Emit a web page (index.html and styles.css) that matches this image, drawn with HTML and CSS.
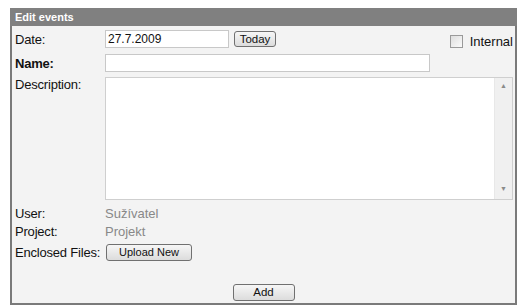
FILE: index.html
```html
<!DOCTYPE html>
<html lang="en">
<head>
  <meta charset="UTF-8">
  <meta name="viewport" content="width=device-width, initial-scale=1.0">
  <title>Edit events</title>
  <link rel="stylesheet" href="styles.css">
</head>
<body>
  <div class="panel">
    <div class="panel-title">Edit events</div>
    <div class="panel-body">
      <div class="row row-date">
        <label class="label">Date:</label>
        <div class="field">
          <input class="input input-date" type="text" value="27.7.2009">
          <button class="button button-today">Today</button>
          <span class="internal">
            <span class="checkbox"></span>
            Internal
          </span>
        </div>
      </div>

      <div class="row row-name">
        <label class="label label-bold">Name:</label>
        <div class="field">
          <input class="input input-name" type="text">
        </div>
      </div>

      <div class="row row-desc">
        <label class="label">Description:</label>
        <div class="field">
          <div class="textarea-box">
            <textarea class="textarea"></textarea>
            <div class="scrollbar">
              <span class="arrow">&#9650;</span>
              <span class="arrow">&#9660;</span>
            </div>
          </div>
        </div>
      </div>

      <div class="row row-text row-user">
        <span class="label">User:</span>
        <span class="value">Sužívatel</span>
      </div>
      <div class="row row-text">
        <span class="label">Project:</span>
        <span class="value">Projekt</span>
      </div>

      <div class="row row-files">
        <span class="label">Enclosed Files:</span>
        <div class="field">
          <button class="button button-upload">Upload New</button>
        </div>
      </div>

      <div class="actions">
        <button class="button button-add">Add</button>
      </div>
    </div>
  </div>
</body>
</html>
```

FILE: styles.css
```css
body {
  margin: 0;
  padding: 0;
  background: #fff;
  font-family: "Liberation Sans", Arial, sans-serif;
  font-size: 13px;
  color: #111;
}

.panel {
  margin: 8px 0 0 10px;
  width: 507px;
  height: 297px;
  box-sizing: border-box;
  border: 2px solid #7a7a7a;
  border-top: 0;
  background: #f3f3f3;
}

.panel-title {
  height: 18px;
  line-height: 18px;
  margin: 0 -2px;
  padding-left: 5px;
  background: #808080;
  color: #fff;
  font-size: 11px;
  font-weight: bold;
}

.panel-body {
  padding: 4px 2px 0 0;
}

.row {
  display: grid;
  grid-template-columns: 93px 1fr;
  align-items: center;
  line-height: 15px;
}

.label {
  padding-left: 3px;
  letter-spacing: -0.2px;
}

.label-bold {
  font-weight: bold;
}

.field {
  display: flex;
  align-items: center;
  height: 18px;
}

.input {
  box-sizing: border-box;
  height: 18px;
  border: 1px solid #c8c8c8;
  background: #fff;
  font-family: inherit;
  font-size: 12px;
  color: #111;
  padding: 0 2px;
  margin: 0;
  outline: none;
}

.input-date {
  width: 124px;
}

.input-name {
  width: 325px;
}

.row-name {
  margin-top: 6px;
}

.row-desc {
  margin-top: 5px;
  align-items: start;
}

.row-desc .field {
  height: auto;
}

.textarea-box {
  display: flex;
  width: 408px;
  height: 123px;
  box-sizing: border-box;
  border: 1px solid #cfcfcf;
  background: #fff;
}

.textarea {
  flex: 1;
  border: none;
  resize: none;
  outline: none;
  margin: 0;
  padding: 0;
  background: #fff;
}

.scrollbar {
  width: 17px;
  background: #f0f0f0;
  border-left: 1px solid #e8e8e8;
  display: flex;
  flex-direction: column;
  justify-content: space-between;
  align-items: center;
  padding: 4px 0 6px;
}

.arrow {
  font-size: 7px;
  color: #8a8a8a;
  line-height: 8px;
}

.row-text {
  line-height: 18px;
}

.row-user {
  margin-top: 5px;
}

.value {
  color: #888;
}

.row-files {
  margin-top: 2px;
}

.button {
  box-sizing: border-box;
  height: 17px;
  padding: 0;
  margin: 0;
  border: 1px solid #707070;
  border-radius: 3px;
  background: linear-gradient(#f6f6f6, #dcdcdc);
  font-family: inherit;
  font-size: 11.5px;
  color: #111;
  line-height: 15px;
}

.button-today {
  width: 42px;
  margin-left: 5px;
  height: 16px;
}

.button-upload {
  width: 86px;
  margin-left: 1px;
  font-size: 11px;
}

.button-add {
  width: 62px;
}

.internal {
  margin-left: auto;
  display: flex;
  align-items: flex-end;
  align-self: stretch;
  gap: 7px;
  line-height: 13px;
}

.checkbox {
  width: 11px;
  height: 11px;
  border: 1px solid #9a9a9a;
  background: linear-gradient(135deg, #dedede, #fafafa);
}

.actions {
  display: flex;
  justify-content: center;
  margin-top: 23px;
  padding-left: 2px;
}
```
